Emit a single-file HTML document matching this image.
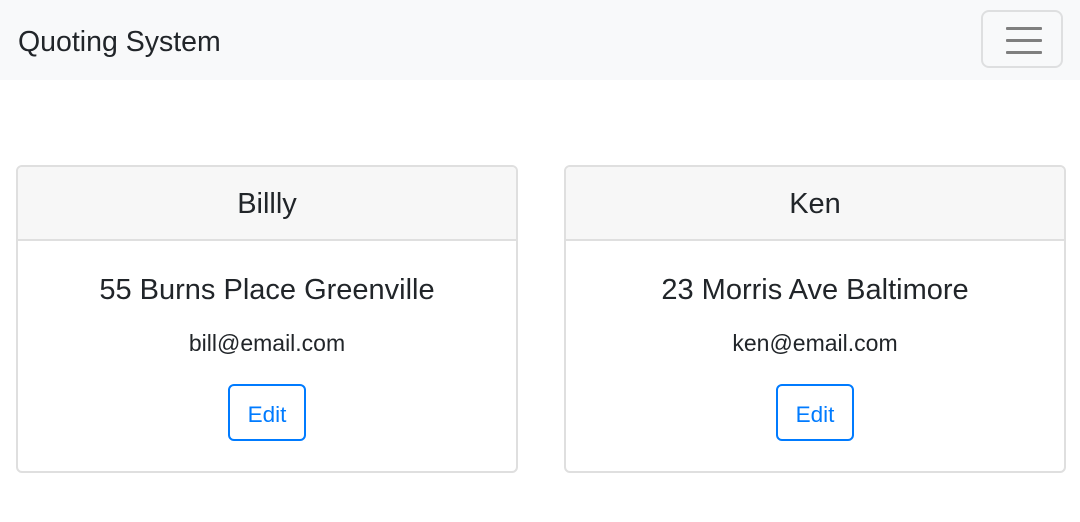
<!DOCTYPE html>
<html><head><style>
*{box-sizing:border-box;margin:0;padding:0}
body{width:1080px;height:522px;background:#fff;font-family:"Liberation Sans",Arial,sans-serif;color:#212529;position:relative;overflow:hidden}
.nav{position:absolute;left:0;top:0;width:1080px;height:80px;background:#f8f9fa}
.brand{position:absolute;left:18px;top:26px;font-size:28.5px;line-height:32px;color:#212529}
.tog{position:absolute;left:981px;top:10px;width:82px;height:58px;border:2px solid rgba(0,0,0,.1);border-radius:8px}
.tog i{position:absolute;left:23px;width:36px;height:3px;background:#7f7f7f;border-radius:1px}
.card{position:absolute;top:165px;width:502px;height:308px;border:2px solid #dfdfdf;border-radius:6px;overflow:hidden;text-align:center}
.hd{height:74px;background:#f7f7f7;border-bottom:2px solid #dfdfdf;font-size:29px;line-height:74px}
.addr{font-size:29px;margin-top:32px;line-height:34px}
.em{font-size:23px;margin-top:23px;line-height:26px}
.btn{display:inline-block;margin-top:28px;width:78px;height:57px;border:2px solid #007bff;border-radius:6px;color:#007bff;font-size:22.5px;line-height:57px}
</style></head><body>
<div class="nav"><div class="brand">Quoting System</div>
<div class="tog"><i style="top:15px"></i><i style="top:27px"></i><i style="top:39px"></i></div></div>
<div class="card" style="left:16px"><div class="hd">Billly</div><div class="addr">55 Burns Place Greenville</div><div class="em">bill@email.com</div><div class="btn">Edit</div></div>
<div class="card" style="left:564px"><div class="hd">Ken</div><div class="addr">23 Morris Ave Baltimore</div><div class="em">ken@email.com</div><div class="btn">Edit</div></div>
</body></html>
